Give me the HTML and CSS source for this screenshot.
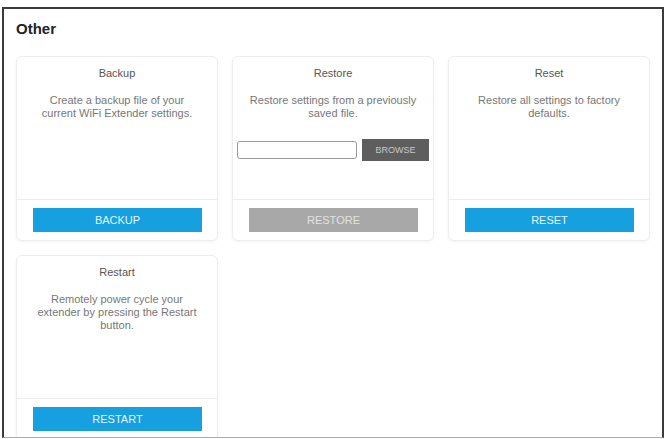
FILE: index.html
```html
<!DOCTYPE html>
<html lang="en">
<head>
    <meta charset="UTF-8">
    <meta name="viewport" content="width=device-width, initial-scale=1.0">
    <title>Other - WiFi Extender</title>
    <link rel="stylesheet" href="styles.css">
</head>
<body>
    <section class="panel">
        <h1 class="panel-title">Other</h1>

        <div class="card-grid">
            <div class="card">
                <div class="card-body">
                    <h2>Backup</h2>
                    <p>Create a backup file of your current WiFi Extender settings.</p>
                </div>
                <div class="card-footer">
                    <button class="btn">BACKUP</button>
                </div>
            </div>

            <div class="card">
                <div class="card-body">
                    <h2>Restore</h2>
                    <p class="text-wide">Restore settings from a previously saved file.</p>
                    <div class="file-row">
                        <input type="text" class="file-name">
                        <button class="btn-browse">BROWSE</button>
                    </div>
                </div>
                <div class="card-footer">
                    <button class="btn btn-disabled" disabled>RESTORE</button>
                </div>
            </div>

            <div class="card">
                <div class="card-body">
                    <h2>Reset</h2>
                    <p>Restore all settings to factory defaults.</p>
                </div>
                <div class="card-footer">
                    <button class="btn">RESET</button>
                </div>
            </div>

            <div class="card">
                <div class="card-body">
                    <h2>Restart</h2>
                    <p>Remotely power cycle your extender by pressing the Restart button.</p>
                </div>
                <div class="card-footer">
                    <button class="btn">RESTART</button>
                </div>
            </div>
        </div>
    </section>
</body>
</html>
```

FILE: styles.css
```css
/* Reset básico */
* {
    margin: 0;
    padding: 0;
    box-sizing: border-box;
}

body {
    font-family: 'Liberation Sans', Arial, sans-serif;
    background: #fff;
    color: #666;
}

.panel {
    margin: 7px 3px 0 2px;
    height: 431px;
    padding: 10px 12px 0 12px;
    border: 2px solid #3b3b3b;
    border-bottom: 1px solid #aaa;
    overflow: hidden;
}

.panel-title {
    font-size: 15px;
    line-height: 20px;
    font-weight: bold;
    color: #222;
    margin-bottom: 17px;
}

.card-grid {
    display: grid;
    grid-template-columns: repeat(3, 202px);
    gap: 14px;
}

.card {
    height: 185px;
    border: 1px solid #ededed;
    border-radius: 6px;
    box-shadow: 0 1px 3px rgba(0, 0, 0, 0.05);
    display: flex;
    flex-direction: column;
}

.card-body {
    height: 142px;
    padding: 9px 4px 0 4px;
    text-align: center;
}

.card-body h2 {
    font-size: 11px;
    line-height: 14px;
    font-weight: normal;
    color: #555;
    margin-bottom: 14px;
}

.card-body p {
    font-size: 11px;
    line-height: 13px;
    color: #777;
    padding: 0 14px;
}

.card-body p.text-wide {
    padding: 0 5px;
}

.file-row {
    display: flex;
    align-items: center;
    gap: 5px;
    margin-top: 19px;
}

.file-name {
    width: 120px;
    height: 18px;
    border: 1px solid #999;
    border-radius: 3px;
    background: #fff;
}

.btn-browse {
    width: 68px;
    height: 22px;
    border: none;
    background: #5e5e5e;
    color: #c8c8c8;
    font-family: inherit;
    font-size: 9px;
}

.card-footer {
    border-top: 1px solid #eee;
    padding: 8px 15px 0 16px;
}

.btn {
    display: block;
    width: 100%;
    height: 24px;
    border: none;
    background: #17a0df;
    color: #e4f5ff;
    font-family: inherit;
    font-size: 11px;
}

.btn-disabled {
    background: #a8a8a8;
    color: #e2e2e2;
}
```
